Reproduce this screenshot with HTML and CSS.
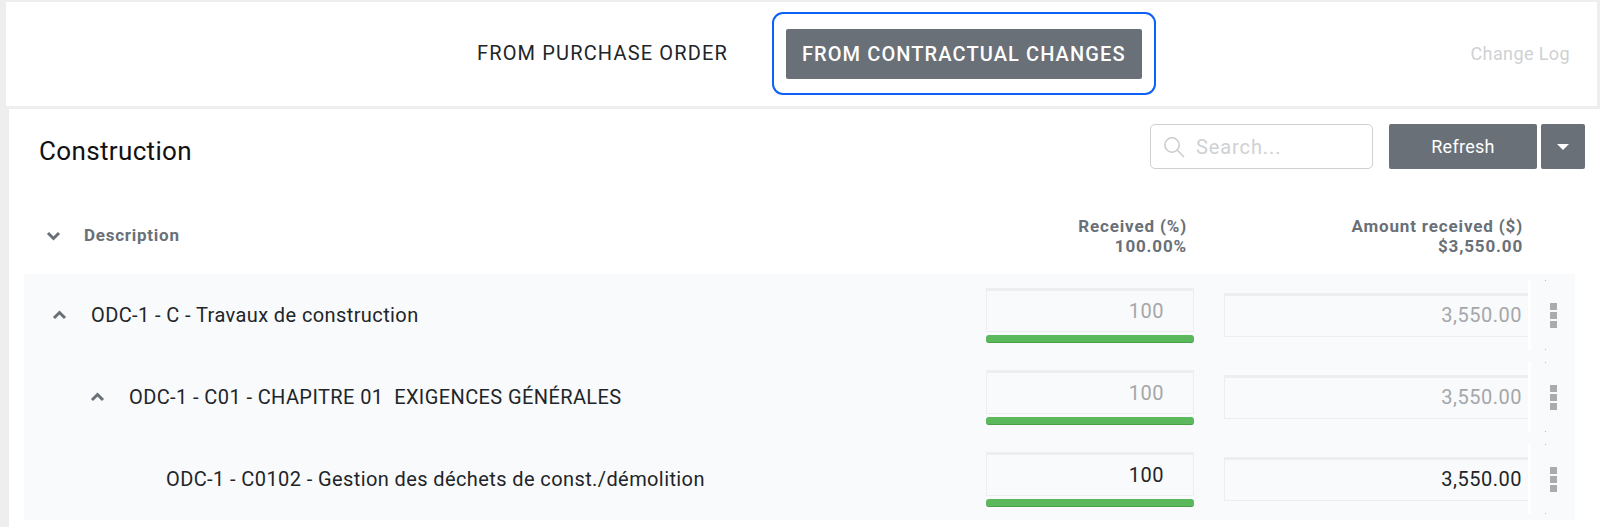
FILE: index.html
```html
<!DOCTYPE html>
<html lang="en">
<head>
    <meta charset="UTF-8">
    <title>Construction</title>
    <link rel="stylesheet" href="styles.css">
</head>
<body>
<header class="top-bar">
    <nav class="tabs">
        <a class="tab">FROM PURCHASE ORDER</a>
        <div class="tab-ring"><a class="tab tab-active">FROM CONTRACTUAL CHANGES</a></div>
    </nav>
    <a class="change-log">Change Log</a>
</header>

<main class="content">
    <div class="title-row">
        <h1 class="title">Construction</h1>
        <div class="search">
            <svg class="search-icon" width="22" height="22" viewBox="0 0 22 22" fill="none" stroke="#c9cbcd" stroke-width="1.5">
                <circle cx="9" cy="9" r="7.2"/>
                <path d="M14.3 14.3 L21 21"/>
            </svg>
            <span class="search-text">Search...</span>
        </div>
        <button class="btn btn-refresh">Refresh</button>
        <button class="btn btn-caret"><span class="caret"></span></button>
    </div>

    <div class="table-head">
        <svg class="chev head-chev" width="15" height="10" viewBox="0 0 15 10" fill="none"><path d="M2 2 L7.5 7.5 L13 2"/></svg>
        <span class="head-desc">Description</span>
        <div class="head-pct">Received (%)<br>100.00%</div>
        <div class="head-amount">Amount received ($)<br>$3,550.00</div>
    </div>

    <div class="rows">
        <div class="row">
            <div class="name level-0">
                <svg class="chev" width="15" height="10" viewBox="0 0 15 10" fill="none"><path d="M2 8 L7.5 2.5 L13 8"/></svg>
                <span>ODC-1 - C - Travaux de construction</span>
            </div>
            <div class="pct">
                <div class="field field-pct is-off">100</div>
                <div class="bar"></div>
            </div>
            <div class="field field-amount is-off">3,550.00</div>
            <div class="actions"><i class="dot"></i><span class="kebab"><i></i><i></i><i></i></span><i class="dot"></i></div>
        </div>
        <div class="row">
            <div class="name level-1">
                <svg class="chev" width="15" height="10" viewBox="0 0 15 10" fill="none"><path d="M2 8 L7.5 2.5 L13 8"/></svg>
                <span>ODC-1 - C01 - CHAPITRE 01&nbsp; EXIGENCES GÉNÉRALES</span>
            </div>
            <div class="pct">
                <div class="field field-pct is-off">100</div>
                <div class="bar"></div>
            </div>
            <div class="field field-amount is-off">3,550.00</div>
            <div class="actions"><i class="dot"></i><span class="kebab"><i></i><i></i><i></i></span><i class="dot"></i></div>
        </div>
        <div class="row">
            <div class="name level-2">
                <span>ODC-1 - C0102 - Gestion des déchets de const./démolition</span>
            </div>
            <div class="pct">
                <div class="field field-pct">100</div>
                <div class="bar"></div>
            </div>
            <div class="field field-amount">3,550.00</div>
            <div class="actions"><i class="dot"></i><span class="kebab"><i></i><i></i><i></i></span><i class="dot"></i></div>
        </div>
    </div>
</main>
</body>
</html>
```

FILE: styles.css
```css
* {
    box-sizing: border-box;
}
html, body {
    margin: 0;
    padding: 0;
    height: 100%;
    overflow: hidden;
}
body {
    display: flex;
    flex-direction: column;
    background: #eeeeee;
    padding-top: 2px;
    font-family: Roboto, "Liberation Sans", sans-serif;
    color: #212529;
}

/* top bar */
.top-bar {
    display: flex;
    flex: none;
    align-items: center;
    height: 104px;
    margin: 0 3px 3px 6px;
    padding: 0 27px 2px 455px;
    background: #fff;
}
.tabs {
    display: flex;
    align-items: center;
}
.tab {
    display: block;
    padding: 0 16px;
    font-size: 20px;
    font-weight: 400;
    line-height: 50px;
    height: 50px;
    letter-spacing: 1.15px;
    color: #212529;
}
.tab-ring {
    margin-left: 28px;
    padding: 15px 12px 14px;
    border: 2.5px solid #0d62f5;
    border-radius: 11px;
}
.tab-active {
    background: #697077;
    color: #fff;
    border-radius: 2px;
    font-weight: 500;
    letter-spacing: 1.1px;
}
.change-log {
    margin-left: auto;
    font-size: 18px;
    letter-spacing: 0.4px;
    color: #cfd1d3;
}

/* content */
.content {
    flex: 1;
    margin-left: 9px;
    padding: 15px 15px 0 15px;
    background: #fff;
}
.title-row {
    display: flex;
    align-items: center;
    height: 45px;
}
.title {
    margin: 8px auto 0 15px;
    font-size: 26px;
    font-weight: 400;
    letter-spacing: 0.35px;
    color: #111;
}
.search {
    display: flex;
    align-items: center;
    width: 223px;
    height: 45px;
    padding-left: 12px;
    border: 1px solid #ced0d2;
    border-radius: 5px;
}
.search-text {
    margin-left: 11px;
    font-size: 20px;
    letter-spacing: 0.9px;
    color: #cfd1d3;
}
.btn {
    height: 45px;
    padding: 0;
    border: 0;
    border-radius: 2px;
    background: #697077;
    color: #fff;
    font-family: inherit;
    font-size: 18px;
    font-weight: 400;
    letter-spacing: 0.3px;
}
.btn-refresh {
    width: 148px;
    margin-left: 16px;
}
.btn-caret {
    width: 44px;
    margin-left: 4px;
}
.caret {
    display: block;
    width: 0;
    margin: 0 auto;
    border-top: 6px solid #fff;
    border-left: 6px solid transparent;
    border-right: 6px solid transparent;
}

/* table head */
.table-head {
    display: flex;
    align-items: center;
    height: 105px;
    padding-top: 28px;
    color: #697077;
    font-size: 17px;
    font-weight: 700;
    letter-spacing: 0.85px;
    line-height: 20px;
}
.head-chev {
    margin-left: 22px;
    flex: none;
}
.head-desc {
    margin-left: 23px;
    margin-bottom: 1px;
    letter-spacing: 0.75px;
}
.head-pct {
    margin-left: auto;
    text-align: right;
}
.head-amount {
    width: 336px;
    margin-right: 62px;
    text-align: right;
}
.chev {
    flex: none;
}
.chev path {
    stroke: #697077;
    stroke-width: 3;
}

/* rows */
.rows {
    width: 1551px;
    background: #f9fafb;
}
.row {
    display: flex;
    align-items: center;
    height: 82px;
    font-size: 20px;
}
.name {
    display: flex;
    align-items: center;
    flex: 1;
    color: #212529;
    letter-spacing: 0.4px;
}
.name .chev {
    margin-right: 24px;
}
.level-0 {
    padding-left: 28px;
}
.level-1 {
    padding-left: 66px;
}
.level-2 {
    padding-left: 142px;
}
.pct {
    width: 208px;
    margin-right: 30px;
}
.field {
    height: 44px;
    border: 1px solid #eceef0;
    border-top-width: 3px;
    line-height: 38px;
    text-align: right;
    letter-spacing: 0.5px;
    color: #212529;
}
.field-pct {
    padding-right: 29px;
    line-height: 40px;
}
.field-amount {
    width: 304px;
    padding-right: 6px;
    border-right: 0;
}
.is-off {
    color: #a4a7aa;
}
.bar {
    height: 8px;
    margin-top: 3px;
    border-radius: 3px;
    background: #5cb85c;
    border-bottom: 1px solid #46a046;
}
.actions {
    display: flex;
    flex-direction: column;
    align-items: center;
    justify-content: space-between;
    width: 47px;
    height: 70px;
    border-left: 3px solid #fff;
}
.dot {
    width: 1px;
    height: 1px;
    margin-right: 16px;
    background: #b8babc;
}
.kebab {
    display: flex;
    flex-direction: column;
    gap: 2px;
}
.kebab i {
    display: block;
    width: 7px;
    height: 7px;
    background: #a9abad;
}
```
